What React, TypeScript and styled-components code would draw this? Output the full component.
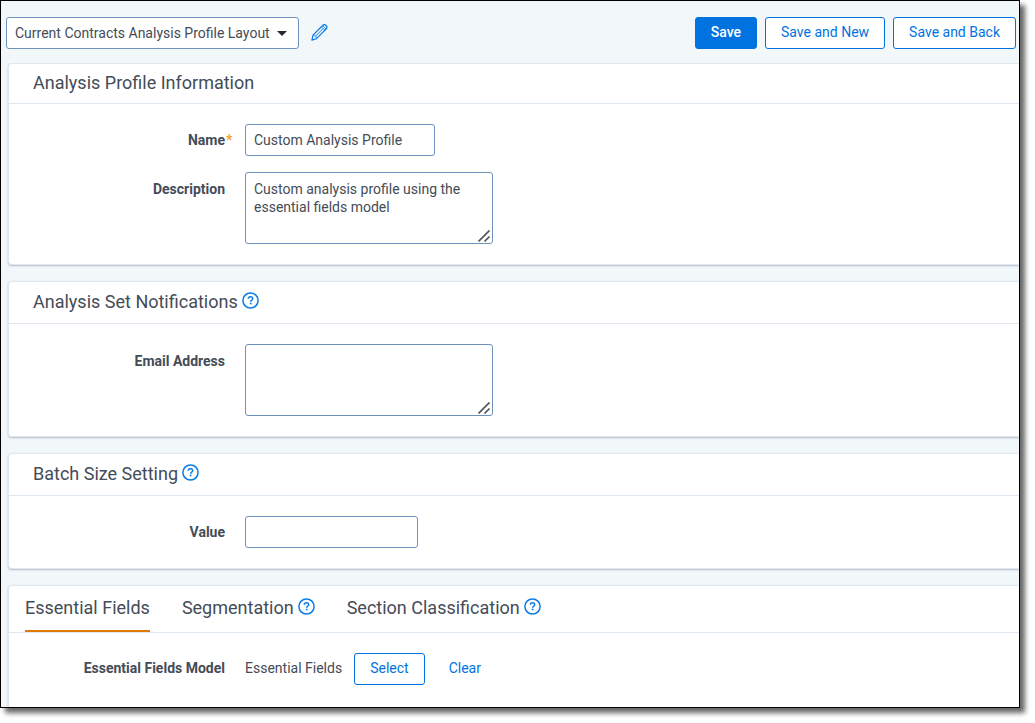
import React, { useState } from "react";
import styled, { createGlobalStyle, css } from "styled-components";

const color = {
  page: "#f2f7fa",
  text: "#444c57",
  blue: "#0073e0",
  icon: "#0b7de6",
  field: "#6f92bd",
  line: "#dfe7f1",
  accent: "#dd7a01",
  required: "#f79d2f",
};

const GlobalStyle = createGlobalStyle`
  *, *::before, *::after { box-sizing: border-box; }
  body {
    margin: 0;
    background: #fff;
    color: ${color.text};
    font-family: Roboto, "Liberation Sans", sans-serif;
    font-size: 14px;
    line-height: 18px;
  }
  button, input, select, textarea { font: inherit; color: inherit; }
`;

const Frame = styled.div`
  display: flex;
  flex-direction: column;
  min-height: calc(100vh - 15px);
  margin: 0 15px 15px 0;
  border: 1px solid #000;
  background: ${color.page};
  box-shadow: 5px 5px 5px rgba(0, 0, 0, 0.6);
`;

const Content = styled.main`
  display: flex;
  flex-direction: column;
  flex: 1;
  gap: 16px;
  padding-left: 7px;
  overflow: hidden;
`;

const Toolbar = styled.header`
  display: flex;
  align-items: center;
  gap: 8px;
  padding: 16px 3px 14px 5px;
`;

const LayoutPicker = styled.div`
  position: relative;
  margin-right: 4px;
`;

const LayoutSelect = styled.select`
  display: block;
  height: 32px;
  padding: 0 28px 0 8px;
  border: 1px solid ${color.field};
  border-radius: 3px;
  background: #fff;
  appearance: none;
`;

const Caret = styled.svg`
  position: absolute;
  top: 14px;
  right: 12px;
  pointer-events: none;
`;

const IconButton = styled.button`
  display: flex;
  padding: 0 0 2px;
  border: 0;
  background: none;
  color: ${color.icon};
  cursor: pointer;
`;

const Actions = styled.div`
  display: flex;
  gap: 8px;
  margin-left: auto;
`;

const Button = styled.button<{ $variant?: "primary" | "plain" }>`
  height: 32px;
  padding: 0 15px 2px;
  border: 1px solid ${color.blue};
  border-radius: 3px;
  background: #fff;
  color: ${color.blue};
  cursor: pointer;
  ${({ $variant }) =>
    $variant === "primary" &&
    css`
      background: ${color.blue};
      color: #fff;
      font-weight: 500;
    `}
  ${({ $variant }) =>
    $variant === "plain" &&
    css`
      border-color: transparent;
      background: none;
    `}
`;

const Card = styled.section<{ $fill?: boolean }>`
  flex: ${({ $fill }) => ($fill ? "1 0 auto" : "0 0 auto")};
  border: 1px solid ${color.line};
  border-right: 0;
  border-radius: 4px 0 0 4px;
  background: #fff;
  box-shadow: 0 1px 2px rgba(60, 80, 105, 0.35);
  ${({ $fill }) => $fill && "border-bottom: 0; border-bottom-left-radius: 0;"}
`;

const CardHeader = styled.div<{ $tall?: boolean }>`
  display: flex;
  align-items: center;
  gap: 4px;
  height: ${({ $tall }) => ($tall ? 42 : 40)}px;
  padding: 0 24px 2px;
  border-bottom: 1px solid ${color.line};
`;

const CardTitle = styled.h2`
  margin: 0;
  font-size: 18px;
  line-height: 24px;
  font-weight: 400;
`;

const CardBody = styled.div`
  display: flex;
  flex-direction: column;
  gap: 16px;
  padding: 20px 0;
`;

const Row = styled.div`
  display: flex;
  align-items: flex-start;
`;

const ActionRow = styled(Row)`
  align-items: center;
`;

const labelStyle = css`
  display: flex;
  justify-content: flex-end;
  flex: none;
  width: 236px;
  font-weight: 700;
`;

const Label = styled.label<{ $area?: boolean }>`
  ${labelStyle}
  padding-top: ${({ $area }) => ($area ? 8 : 7)}px;
`;

const Term = styled.span`
  ${labelStyle}
  padding-bottom: 2px;
`;

const Mark = styled.span`
  width: 20px;
  padding-left: 1px;
  color: ${color.required};
`;

const TextInput = styled.input<{ $width: number }>`
  width: ${({ $width }) => $width}px;
  height: 32px;
  padding: 0 8px;
  border: 1px solid ${color.field};
  border-radius: 3px;
  background: #fff;
`;

const AreaWrap = styled.div`
  position: relative;
`;

const TextArea = styled.textarea`
  display: block;
  width: 248px;
  height: 72px;
  padding: 7px 8px;
  border: 1px solid ${color.field};
  border-radius: 3px;
  background: #fff;
  resize: none;
`;

const Grip = styled.svg`
  position: absolute;
  right: 2px;
  bottom: 1px;
  pointer-events: none;
`;

const TabBar = styled.div`
  display: flex;
  gap: 32px;
  padding: 0 16px;
  border-bottom: 1px solid ${color.line};
`;

const TabItem = styled.div<{ $active: boolean }>`
  display: flex;
  align-items: center;
  gap: 4px;
  height: 46px;
  padding-bottom: 1px;
  border-bottom: 2px solid ${({ $active }) => ($active ? color.accent : "transparent")};
`;

const Tab = styled.button`
  padding: 0;
  border: 0;
  background: none;
  font-size: 18px;
  line-height: 24px;
  cursor: pointer;
`;

const Value = styled.span`
  padding-bottom: 2px;
  margin-right: 12px;
`;

const RowActions = styled.div`
  display: flex;
  gap: 8px;
`;

const HelpIcon = () => (
  <svg width="17" height="17" viewBox="0 0 17 17" fill="none" aria-hidden="true">
    <circle cx="8.5" cy="8.5" r="7.6" stroke="currentColor" strokeWidth="1.5" />
    <path
      d="M6.3 6.7c0-1.300.9-2 2.200-2s2.200.7 2.200 1.800c0 .9-.5 1.300-1.200 1.800-.6.4-.9.7-.9 1.400"
      stroke="currentColor"
      strokeWidth="1.5"
    />
    <rect x="7.800" y="10.700" width="1.700" height="1.600" fill="currentColor" />
  </svg>
);

const PencilIcon = () => (
  <svg width="17" height="17" viewBox="0 0 17 17" fill="none" aria-hidden="true">
    <path
      d="M.9 16.1l1.100-5L11.600 1.500c1-1 2.500-1 3.500 0s1 2.500 0 3.500L5.500 14.700z"
      stroke="currentColor"
      strokeWidth="1.2"
      strokeLinejoin="round"
    />
    <path
      d="M10.300 2.800l3.700 3.600M11.600 1.600l3.600 3.500M2.100 11.200c1.900-.2 3.500 1.400 3.300 3.400M4.500 12.200l7.400-7.400"
      stroke="currentColor"
      strokeWidth="0.9"
    />
    <path d="M.8 16.200l.5-2.200 1.700 1.700z" fill="currentColor" />
  </svg>
);

const Help = ({ topic }: { topic: string }) => (
  <IconButton type="button" aria-label={`Help: ${topic}`}>
    <HelpIcon />
  </IconButton>
);

const Area = ({ id, text }: { id: string; text?: string }) => (
  <AreaWrap>
    <TextArea id={id} defaultValue={text} spellCheck={false} />
    <Grip width="13" height="13" viewBox="0 0 13 13" aria-hidden="true">
      <path d="M.5 11.500L11.500.5M6.500 11.500l5-5" stroke="#505459" strokeWidth="1.700" />
    </Grip>
  </AreaWrap>
);

const tabs = [
  { name: "Essential Fields", help: false },
  { name: "Segmentation", help: true },
  { name: "Section Classification", help: true },
];

export default function App() {
  const [active, setActive] = useState(tabs[0].name);

  return (
    <>
      <GlobalStyle />
      <Frame>
        <Toolbar>
          <LayoutPicker>
            <LayoutSelect aria-label="Layout">
              <option>Current Contracts Analysis Profile Layout</option>
            </LayoutSelect>
            <Caret width="10" height="5" viewBox="0 0 10 5" aria-hidden="true">
              <path d="M0 0h10L5 5z" fill="#222a33" />
            </Caret>
          </LayoutPicker>
          <IconButton type="button" aria-label="Edit layout">
            <PencilIcon />
          </IconButton>
          <Actions>
            <Button type="button" $variant="primary">Save</Button>
            <Button type="button">Save and New</Button>
            <Button type="button">Save and Back</Button>
          </Actions>
        </Toolbar>

        <Content>
          <Card>
            <CardHeader>
              <CardTitle>Analysis Profile Information</CardTitle>
            </CardHeader>
            <CardBody>
              <Row>
                <Label htmlFor="name">Name<Mark>*</Mark></Label>
                <TextInput id="name" $width={190} defaultValue="Custom Analysis Profile" />
              </Row>
              <Row>
                <Label htmlFor="description" $area>Description<Mark /></Label>
                <Area
                  id="description"
                  text="Custom analysis profile using the essential fields model"
                />
              </Row>
            </CardBody>
          </Card>

          <Card>
            <CardHeader $tall>
              <CardTitle>Analysis Set Notifications</CardTitle>
              <Help topic="Analysis Set Notifications" />
            </CardHeader>
            <CardBody>
              <Row>
                <Label htmlFor="email" $area>Email Address<Mark /></Label>
                <Area id="email" />
              </Row>
            </CardBody>
          </Card>

          <Card>
            <CardHeader $tall>
              <CardTitle>Batch Size Setting</CardTitle>
              <Help topic="Batch Size Setting" />
            </CardHeader>
            <CardBody>
              <Row>
                <Label htmlFor="value">Value<Mark /></Label>
                <TextInput id="value" $width={173} />
              </Row>
            </CardBody>
          </Card>

          <Card $fill>
            <TabBar role="tablist">
              {tabs.map(({ name, help }) => (
                <TabItem key={name} $active={name === active}>
                  <Tab
                    type="button"
                    role="tab"
                    aria-selected={name === active}
                    onClick={() => setActive(name)}
                  >
                    {name}
                  </Tab>
                  {help && <Help topic={name} />}
                </TabItem>
              ))}
            </TabBar>
            <CardBody>
              <ActionRow>
                <Term>Essential Fields Model<Mark /></Term>
                <Value>Essential Fields</Value>
                <RowActions>
                  <Button type="button">Select</Button>
                  <Button type="button" $variant="plain">Clear</Button>
                </RowActions>
              </ActionRow>
            </CardBody>
          </Card>
        </Content>
      </Frame>
    </>
  );
}
